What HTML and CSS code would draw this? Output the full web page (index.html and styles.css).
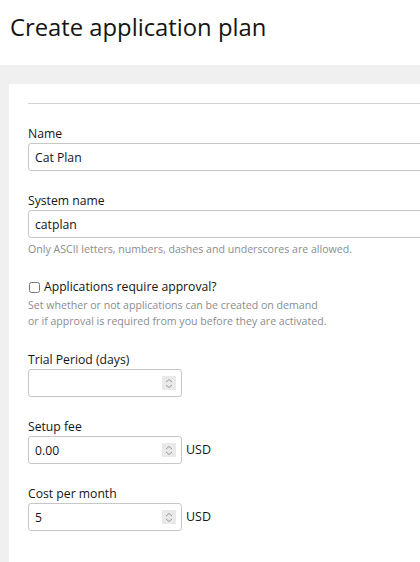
FILE: index.html
```html
<!DOCTYPE html>
<html>
<head>
<meta charset="utf-8">
<link rel="stylesheet" href="styles.css">
</head>
<body>
<header class="page-header">
  <h1 class="title">Create application plan</h1>
</header>
<main class="page-body">
  <section class="card">
    <hr class="rule">
    <form class="form">
      <div class="field">
        <label class="label" for="name">Name</label>
        <input class="input input-wide" id="name" type="text" value="Cat Plan">
      </div>
      <div class="field">
        <label class="label" for="sys">System name</label>
        <input class="input input-wide" id="sys" type="text" value="catplan">
        <p class="hint hint-sys">Only ASCII letters, numbers, dashes and underscores are allowed.</p>
      </div>
      <div class="field field-push">
        <label class="check-label"><input class="check" type="checkbox"> Applications require approval?</label>
        <p class="hint hint-check">Set whether or not applications can be created on demand<br>or if approval is required from you before they are activated.</p>
      </div>
      <div class="field field-push">
        <label class="label" for="trial">Trial Period (days)</label>
        <div class="num-wrap">
          <input class="input input-num" id="trial" type="text">
          <span class="spin"><svg width="8" height="11" viewBox="0 0 8 11"><path d="M1 4 L4 1.5 L7 4 M1 7 L4 9.5 L7 7" fill="none" stroke="#9a9a9a" stroke-width="1"/></svg></span>
        </div>
      </div>
      <div class="field">
        <label class="label" for="setup">Setup fee</label>
        <div class="row">
          <div class="num-wrap">
            <input class="input input-num" id="setup" type="text" value="0.00">
            <span class="spin"><svg width="8" height="11" viewBox="0 0 8 11"><path d="M1 4 L4 1.5 L7 4 M1 7 L4 9.5 L7 7" fill="none" stroke="#9a9a9a" stroke-width="1"/></svg></span>
          </div>
          <span class="unit">USD</span>
        </div>
      </div>
      <div class="field">
        <label class="label" for="cost">Cost per month</label>
        <div class="row">
          <div class="num-wrap">
            <input class="input input-num" id="cost" type="text" value="5">
            <span class="spin"><svg width="8" height="11" viewBox="0 0 8 11"><path d="M1 4 L4 1.5 L7 4 M1 7 L4 9.5 L7 7" fill="none" stroke="#9a9a9a" stroke-width="1"/></svg></span>
          </div>
          <span class="unit">USD</span>
        </div>
      </div>
    </form>
  </section>
</main>
</body>
</html>
```
FILE: styles.css
```css
html, body {
  margin: 0;
  padding: 0;
  overflow: hidden;
  background: #f0f0f0;
}
body {
  width: 420px;
  height: 562px;
  font-family: "Open Sans", "Liberation Sans", sans-serif;
  color: #151515;
}
.page-header {
  background: #fff;
  height: 65px;
  padding-left: 10px;
  box-sizing: border-box;
}
.title {
  margin: 0;
  padding-top: 11px;
  font-family: "Open Sans", sans-serif;
  font-weight: 400;
  font-size: 23.8px;
  line-height: 32px;
  color: #151515;
  white-space: nowrap;
}
.page-body {
  padding: 19px 0 0 9px;
  overflow: hidden;
  height: 497px;
  box-sizing: border-box;
}
.card {
  background: #fff;
  width: 411px;
  height: 478px;
  padding: 19px 0 0 19px;
  box-sizing: border-box;
  overflow: hidden;
}
.rule {
  margin: 0;
  border: 0;
  border-top: 1px solid #d2d2d2;
  height: 0;
}
.form {
  display: flex;
  flex-direction: column;
  gap: 20px;
  padding-top: 20px;
}
.field {
  display: flex;
  flex-direction: column;
  align-items: flex-start;
}
.field-push {
  margin-top: 1px;
}
.label {
  font-size: 12.2px;
  line-height: 17px;
  padding-top: 1px;
  margin-bottom: 1px;
  white-space: nowrap;
}
.input {
  box-sizing: border-box;
  height: 28px;
  border: 1px solid #c7c7c7;
  border-radius: 3px;
  padding: 0 6px;
  font-family: "Open Sans", sans-serif;
  font-size: 12.2px;
  color: #151515;
  background: #fff;
  margin: 0;
  outline: none;
}
.input-wide {
  width: 400px;
}
.input-num {
  width: 154px;
}
.num-wrap {
  position: relative;
  width: 154px;
  height: 28px;
}
.spin {
  position: absolute;
  right: 6px;
  top: 7px;
  width: 14px;
  height: 14px;
  background: #e9e9e9;
  display: flex;
  align-items: center;
  justify-content: center;
}
.hint {
  margin: 0;
  font-size: 10.6px;
  line-height: 16px;
  color: #8a8d90;
  white-space: nowrap;
}
.hint-sys {
  margin-top: 3px;
}
.hint-check {
  margin-top: 1px;
}
.check-label {
  display: flex;
  align-items: center;
  gap: 4px;
  font-size: 12.2px;
  line-height: 18px;
  white-space: nowrap;
}
.check {
  margin: 0 0 0 1px;
  width: 11px;
  height: 11px;
}
.row {
  display: flex;
  align-items: center;
  gap: 4px;
}
.unit {
  font-size: 12.5px;
  line-height: 18px;
}
```
